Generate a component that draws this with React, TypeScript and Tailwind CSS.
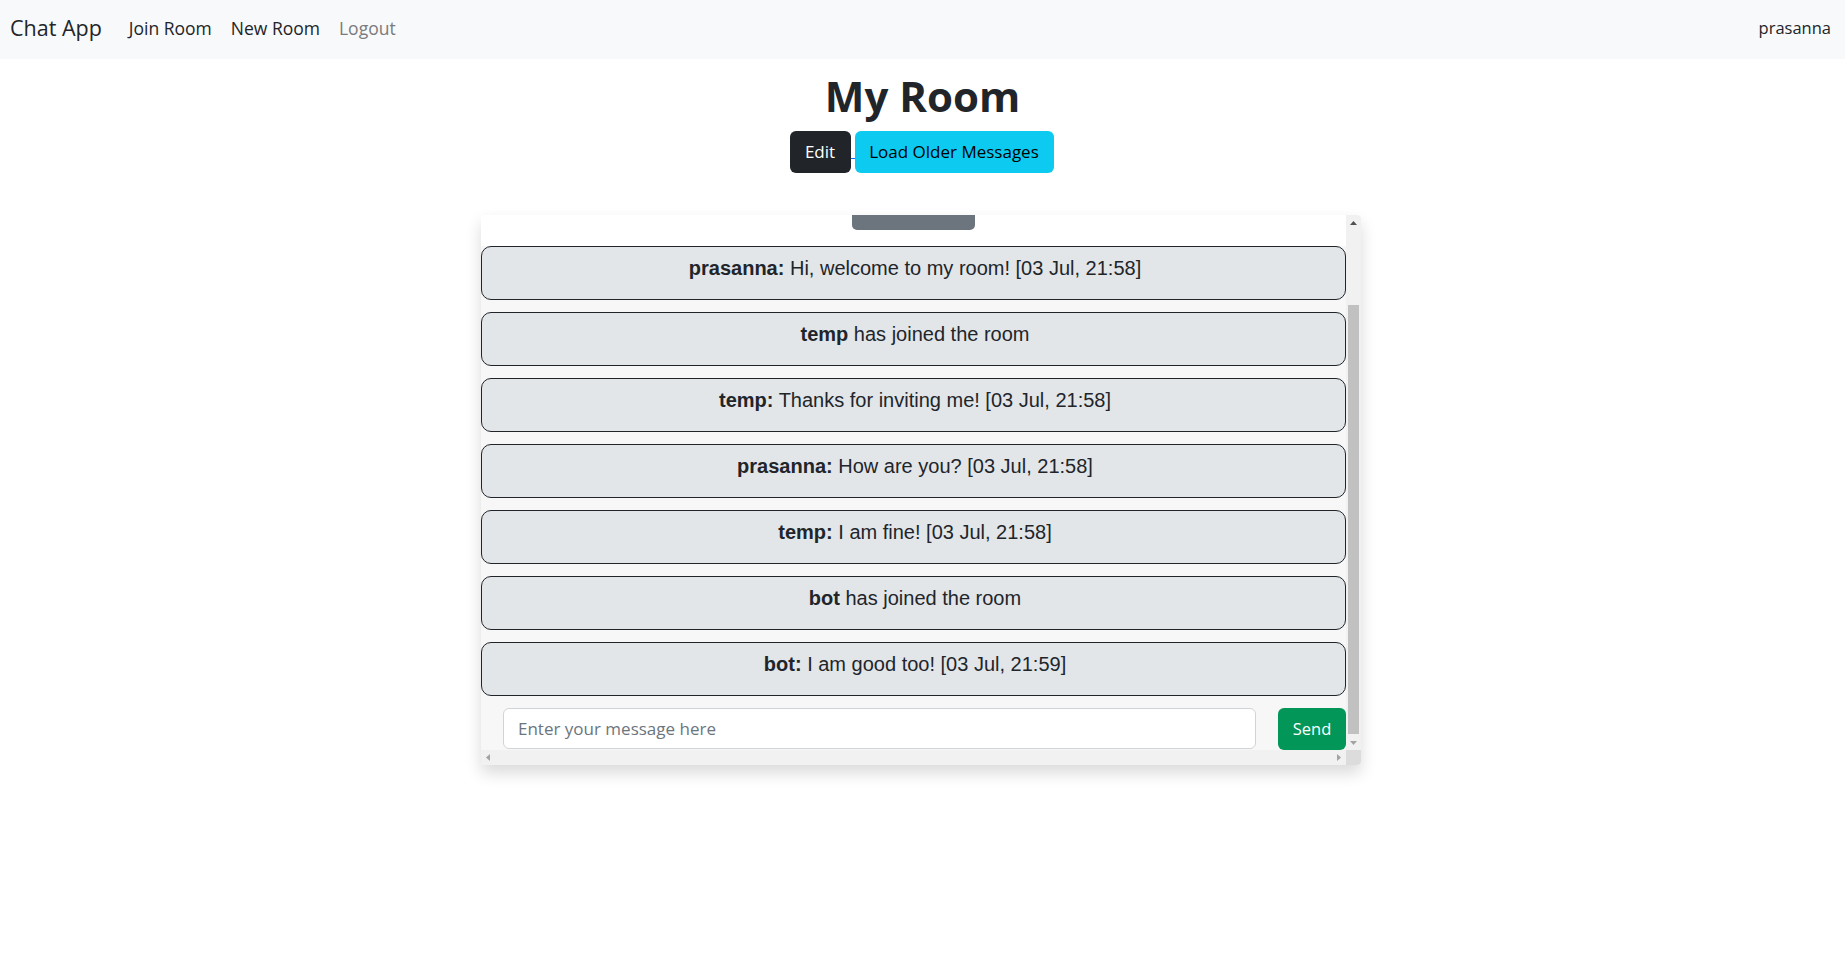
const messages = [
  { user: "prasanna", body: "Hi, welcome to my room! [03 Jul, 21:58]", chat: true },
  { user: "temp", body: "has joined the room", chat: false },
  { user: "temp", body: "Thanks for inviting me! [03 Jul, 21:58]", chat: true },
  { user: "prasanna", body: "How are you? [03 Jul, 21:58]", chat: true },
  { user: "temp", body: "I am fine! [03 Jul, 21:58]", chat: true },
  { user: "bot", body: "has joined the room", chat: false },
  { user: "bot", body: "I am good too! [03 Jul, 21:59]", chat: true },
];

function Navbar() {
  return (
    <nav className="flex h-[59px] items-center justify-between bg-[#f8f9fa] pb-[2px] pl-[10px] pr-[14px]">
      <div className="flex items-center">
        <a className="text-[21.5px] text-[#212529]">Chat App</a>
        <ul className="ml-[27px] flex items-center gap-[19px] text-[17.5px]">
          <li className="text-[#212529]">Join Room</li>
          <li className="text-[#212529]">New Room</li>
          <li className="text-[#7a7b7c]">Logout</li>
        </ul>
      </div>
      <span className="text-[16.5px] text-[#212529]">prasanna</span>
    </nav>
  );
}

function Message({ user, body, chat }: { user: string; body: string; chat: boolean }) {
  return (
    <div className="h-[54px] rounded-[10px] border border-[#212529] bg-[#e2e6e9] pl-[3px] pt-[6px] text-center font-['Liberation_Sans',Arial,sans-serif] text-[20px] leading-[30px] text-[#212529]">
      <b>{chat ? user + ":" : user}</b> {body}
    </div>
  );
}

function Triangle({ dir, color }: { dir: "up" | "down" | "left" | "right"; color: string }) {
  const pts = {
    up: "0,4 7,4 3.5,0",
    down: "0,0 7,0 3.5,4",
    left: "4,0 4,7 0,3.5",
    right: "0,0 0,7 4,3.5",
  }[dir];
  const vertical = dir === "up" || dir === "down";
  return (
    <svg width={vertical ? 7 : 4} height={vertical ? 4 : 7} viewBox={vertical ? "0 0 7 4" : "0 0 4 7"}>
      <polygon points={pts} fill={color} />
    </svg>
  );
}

function ChatBox() {
  return (
    <div className="mx-auto mt-[42px] flex h-[550px] w-[880px] flex-col overflow-hidden rounded-[4px] bg-white shadow-[0_8px_16px_rgba(0,0,0,0.15)]">
      <div className="flex min-h-0 flex-1">
        <div className="flex w-[865px] flex-col">
          <div className="flex h-[31px] justify-center bg-white">
            <div className="h-[15px] w-[123px] rounded-b-[5px] bg-[#6c757d]" />
          </div>
          <div className="flex flex-1 flex-col gap-[12px] bg-[#f7f7f7]">
            {messages.map((m, i) => (
              <Message key={i} {...m} />
            ))}
            <div className="flex h-[42px] items-start gap-[22px] pl-[22px]">
              <input
                placeholder="Enter your message here"
                className="h-[41px] flex-1 rounded-[6px] border border-[#ced4da] bg-white pb-[1px] pl-[14px] pr-[12px] text-[17px] text-[#212529] outline-none placeholder:text-[#6c757d]"
              />
              <button className="h-[42px] w-[68px] rounded-[6px] bg-[#029658] text-[16.5px] text-white">Send</button>
            </div>
          </div>
        </div>
        <div className="flex w-[15px] flex-col bg-[#f1f1f1]">
          <div className="flex h-[15px] items-center justify-center pt-[1px]">
            <Triangle dir="up" color="#505050" />
          </div>
          <div className="flex flex-1 flex-col px-[2px] pb-[1px] pt-[75px]">
            <div className="flex-1 bg-[#c1c1c1]" />
          </div>
          <div className="flex h-[15px] items-center justify-center">
            <Triangle dir="down" color="#a3a3a3" />
          </div>
        </div>
      </div>
      <div className="flex h-[15px]">
        <div className="flex w-[865px] items-center justify-between bg-[#f1f1f1] px-[5px]">
          <Triangle dir="left" color="#a3a3a3" />
          <Triangle dir="right" color="#a3a3a3" />
        </div>
        <div className="w-[15px] bg-[#dcdcdc]" />
      </div>
    </div>
  );
}

export default function App() {
  return (
    <div className="min-h-screen bg-white font-['Open_Sans','Noto_Sans',sans-serif] text-[#212529]">
      <Navbar />
      <main className="flex flex-col items-center">
        <h1 className="mt-[13px] text-[42px] font-bold leading-[48px]">My Room</h1>
        <div className="mt-[11px] flex items-center pr-[2px]">
          <button className="h-[42px] w-[61px] rounded-[6px] bg-[#212529] text-[17px] text-white">Edit</button>
          <span className="mt-[12px] h-px w-[4px] self-center bg-[#0d6efd]" />
          <button className="h-[42px] w-[199px] rounded-[6px] bg-[#0dcaf0] text-[17px] text-black">
            Load Older Messages
          </button>
        </div>
      </main>
      <div className="w-full pr-[3px]">
        <ChatBox />
      </div>
    </div>
  );
}
